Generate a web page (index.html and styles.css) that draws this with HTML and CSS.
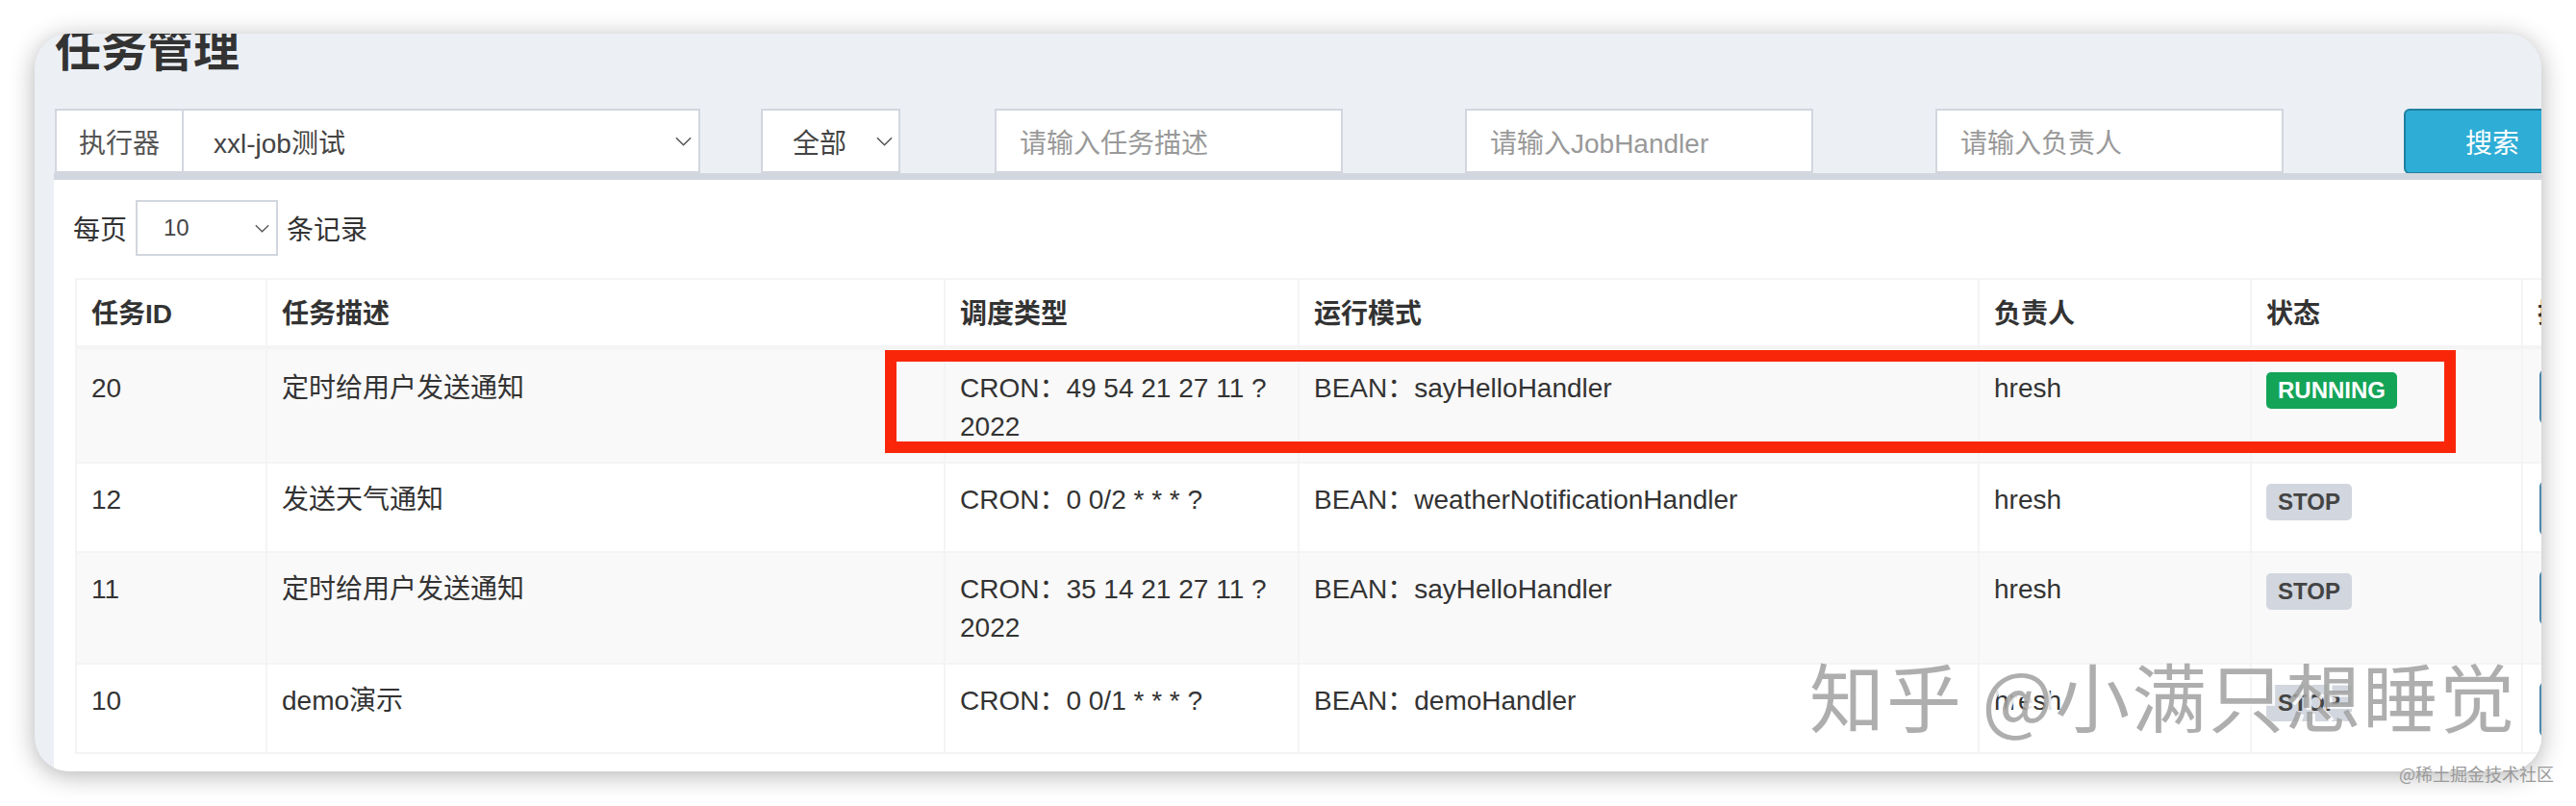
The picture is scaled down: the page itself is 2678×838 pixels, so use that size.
FILE: index.html
```html
<!DOCTYPE html>
<html lang="zh-CN">
<head>
<meta charset="utf-8">
<title>任务管理</title>
<link rel="stylesheet" href="styles.css">
</head>
<body>
<div class="screen">
  <div class="card">
    <h1 class="title">任务管理</h1>
    <div class="filters">
      <div class="group executor">
        <span class="addon">执行器</span>
        <div class="select sel-executor"><span>xxl-job测试</span><svg class="chev" viewBox="0 0 18 10"><polyline points="1,1 9,9 17,1"/></svg></div>
      </div>
      <div class="select sel-status"><span>全部</span><svg class="chev" viewBox="0 0 18 10"><polyline points="1,1 9,9 17,1"/></svg></div>
      <div class="input in-desc">请输入任务描述</div>
      <div class="input in-handler">请输入JobHandler</div>
      <div class="input in-author">请输入负责人</div>
      <button class="btn-search">搜索</button>
    </div>
    <div class="box">
      <div class="length">
        <span>每页</span>
        <div class="select sel-len"><span>10</span><svg class="chev chev-sm" viewBox="0 0 18 10"><polyline points="1,1 9,9 17,1"/></svg></div>
        <span>条记录</span>
      </div>
      <table class="jobs">
        <thead>
          <tr>
            <th class="c1">任务ID</th>
            <th class="c2">任务描述</th>
            <th class="c3">调度类型</th>
            <th class="c4">运行模式</th>
            <th class="c5">负责人</th>
            <th class="c6">状态</th>
            <th class="c7">操作</th>
          </tr>
        </thead>
        <tbody>
          <tr>
            <td>20</td>
            <td>定时给用户发送通知</td>
            <td>CRON：49 54 21 27 11 ? 2022</td>
            <td>BEAN：sayHelloHandler</td>
            <td>hresh</td>
            <td><span class="label label-run">RUNNING</span></td>
            <td><span class="op-btn">操作</span></td>
          </tr>
          <tr>
            <td>12</td>
            <td>发送天气通知</td>
            <td>CRON：0 0/2 * * * ?</td>
            <td>BEAN：weatherNotificationHandler</td>
            <td>hresh</td>
            <td><span class="label label-stop">STOP</span></td>
            <td><span class="op-btn">操作</span></td>
          </tr>
          <tr>
            <td>11</td>
            <td>定时给用户发送通知</td>
            <td>CRON：35 14 21 27 11 ? 2022</td>
            <td>BEAN：sayHelloHandler</td>
            <td>hresh</td>
            <td><span class="label label-stop">STOP</span></td>
            <td><span class="op-btn">操作</span></td>
          </tr>
          <tr>
            <td>10</td>
            <td>demo演示</td>
            <td>CRON：0 0/1 * * * ?</td>
            <td>BEAN：demoHandler</td>
            <td>hresh</td>
            <td><span class="label label-stop">STOP</span></td>
            <td><span class="op-btn">操作</span></td>
          </tr>
        </tbody>
      </table>
    </div>
  </div>
  <div class="annot"></div>
  <div class="wm">知乎 @小满只想睡觉</div>
  <div class="wm-small">@稀土掘金技术社区</div>
</div>
</body>
</html>
```

FILE: styles.css
```css
html, body {
  margin: 0;
  padding: 0;
  background: #ffffff;
}

body {
  font-family: "Liberation Sans", "Noto Sans CJK SC", sans-serif;
  color: #333333;
  font-size: 28px;
}

.screen {
  position: relative;
  width: 2678px;
  height: 838px;
  overflow: hidden;
  padding-top: 35px;
  box-sizing: border-box;
}

.card {
  margin-left: 36px;
  width: 2606px;
  height: 767px;
  border-radius: 36px;
  overflow: hidden;
  background: #ecf0f5;
  box-shadow: 0 4px 26px rgba(0, 0, 0, 0.30);
  display: flex;
  flex-direction: column;
}

.title {
  margin: -6px 0 0 21px;
  font-size: 48px;
  line-height: 48px;
  height: 48px;
  font-weight: 700;
  color: #333333;
  white-space: nowrap;
  flex: none;
}

/* ---------- filter row ---------- */
.filters {
  display: flex;
  margin: 36px 0 0 21px;
  height: 67px;
  flex: none;
}

.filters > * {
  flex: none;
}

.group {
  display: flex;
  height: 67px;
}

.addon {
  width: 134px;
  box-sizing: border-box;
  border: 2px solid #d2d6de;
  background: #ffffff;
  display: flex;
  align-items: center;
  justify-content: center;
  color: #555555;
}

.select {
  box-sizing: border-box;
  border: 2px solid #d2d6de;
  background: #ffffff;
  display: flex;
  align-items: center;
  justify-content: space-between;
  color: #444444;
  white-space: nowrap;
}

.chev {
  width: 17px;
  height: 10px;
  fill: none;
  stroke: #555555;
  stroke-width: 1.6;
}

.chev-sm {
  width: 15px;
  height: 9px;
}

.sel-executor {
  width: 537px;
  border-left: none;
  padding: 0 7px 0 31px;
}

.sel-status {
  width: 145px;
  height: 67px;
  margin-left: 63px;
  padding: 0 6px 0 31px;
}

.input {
  width: 362px;
  height: 67px;
  box-sizing: border-box;
  border: 2px solid #d2d6de;
  background: #ffffff;
  display: flex;
  align-items: center;
  padding-left: 24px;
  color: #999999;
  white-space: nowrap;
}

.in-desc {
  margin-left: 98px;
}

.in-handler,
.in-author {
  margin-left: 127px;
}

.btn-search {
  margin-left: 125px;
  width: 184px;
  height: 68px;
  box-sizing: border-box;
  border: 2px solid #1f7f9f;
  border-radius: 6px;
  background: #2eadd6;
  color: #ffffff;
  font-family: "Liberation Sans", "Noto Sans CJK SC", sans-serif;
  font-size: 28px;
  padding: 0;
}

/* ---------- box ---------- */
.box {
  flex: 1;
  align-self: flex-start;
  width: 2900px;
  margin-left: 20px;
  border-top: 7px solid #d2d6de;
  background: #ffffff;
  padding: 21px 0 0 22px;
}

.length {
  display: flex;
  align-items: center;
  height: 58px;
  margin-left: -2px;
  color: #333333;
}

.sel-len {
  width: 148px;
  height: 58px;
  margin: 0 9px;
  padding: 0 7px 0 27px;
  font-size: 24px;
  color: #444444;
}

/* ---------- table ---------- */
.jobs {
  margin-top: 23px;
  border-collapse: separate;
  border-spacing: 0;
  table-layout: fixed;
  width: 2795px;
  border-top: 2px solid #f4f4f4;
  border-left: 2px solid #f4f4f4;
}

.jobs th,
.jobs td {
  box-sizing: border-box;
  text-align: left;
  vertical-align: top;
  line-height: 40px;
  font-size: 28px;
  border-right: 2px solid #f4f4f4;
  border-bottom: 2px solid #f4f4f4;
  color: #333333;
}

.jobs th {
  font-weight: 700;
  padding: 16px 15px 12px;
  border-bottom-width: 4px;
  background: #ffffff;
  white-space: nowrap;
}

.jobs td {
  padding: 18px 15px 16px;
}

.jobs tbody tr:first-child td {
  padding-top: 21px;
  padding-bottom: 16px;
}

.jobs tbody tr:nth-child(odd) td {
  background: #f9f9f9;
}

.jobs tbody tr:nth-child(even) td {
  background: #ffffff;
}

.c1 { width: 198px; }
.c2 { width: 705px; }
.c3 { width: 368px; }
.c4 { width: 707px; }
.c5 { width: 283px; }
.c6 { width: 282px; }
.c7 { width: 250px; }

.label {
  display: inline-block;
  vertical-align: top;
  margin-top: 3px;
  padding: 7px 12px;
  line-height: 24px;
  font-size: 24px;
  font-weight: 700;
  border-radius: 5px;
}

.label-run {
  background: #14a458;
  color: #ffffff;
}

.label-stop {
  background: #d2d6de;
  color: #444444;
}

.op-btn {
  display: inline-block;
  height: 57px;
  width: 150px;
  box-sizing: border-box;
  border: 2px solid #4d87ab;
  border-radius: 6px;
  background: #3c8dbc;
  color: #ffffff;
  line-height: 53px;
  padding-left: 20px;
  margin-left: 2px;
}

/* ---------- overlays ---------- */
.annot {
  position: absolute;
  left: 920px;
  top: 364px;
  width: 1633px;
  height: 107px;
  box-sizing: border-box;
  border: 12px solid #fa260a;
}

.wm {
  position: absolute;
  left: 1881px;
  top: 683px;
  font-family: "Noto Sans CJK SC", sans-serif;
  font-size: 78px;
  line-height: 78px;
  letter-spacing: 2px;
  color: rgba(160, 160, 160, 0.85);
  text-shadow: 3px 2px 0 rgba(255, 255, 255, 0.85);
  white-space: nowrap;
}

.wm-small {
  position: absolute;
  left: 2494px;
  top: 795px;
  font-family: "Noto Sans CJK SC", sans-serif;
  font-size: 18px;
  line-height: 18px;
  color: #9a9a9a;
  white-space: nowrap;
}
```
